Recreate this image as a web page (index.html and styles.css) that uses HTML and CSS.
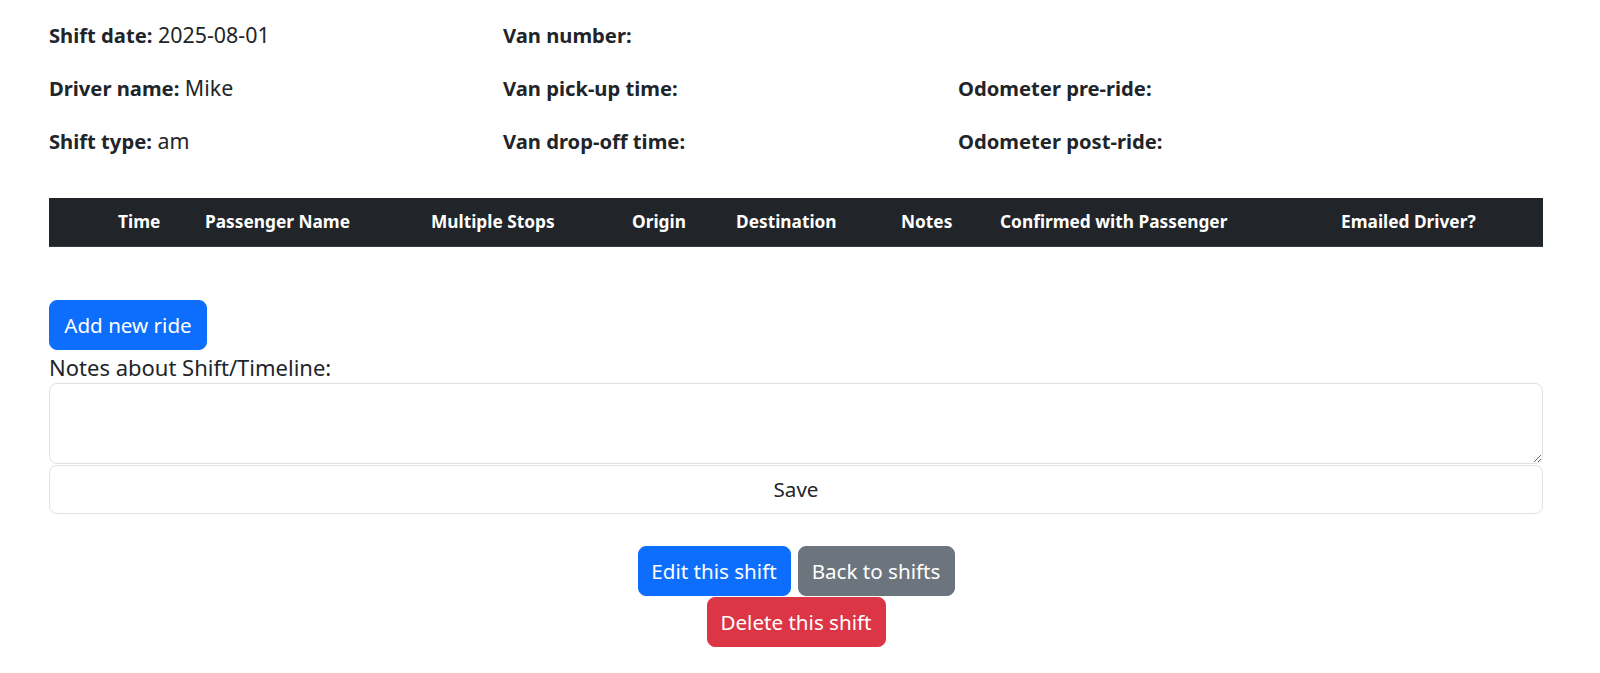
FILE: index.html
```html
<!DOCTYPE html>
<html lang="en">
<head>
<meta charset="utf-8">
<title>Shift</title>
<link rel="stylesheet" href="styles.css">
</head>
<body>
<main class="page">
  <section class="info">
    <p class="field"><strong>Shift date:</strong> 2025-08-01</p>
    <p class="field"><strong>Van number:</strong></p>
    <p class="field"></p>
    <p class="field"><strong>Driver name:</strong> Mike</p>
    <p class="field"><strong>Van pick-up time:</strong></p>
    <p class="field"><strong>Odometer pre-ride:</strong></p>
    <p class="field"><strong>Shift type:</strong> am</p>
    <p class="field"><strong>Van drop-off time:</strong></p>
    <p class="field"><strong>Odometer post-ride:</strong></p>
  </section>

  <table class="rides">
    <colgroup>
      <col class="c0"><col class="c1"><col class="c2"><col class="c3"><col class="c4"><col class="c5"><col class="c6"><col class="c7"><col class="c8">
    </colgroup>
    <thead>
      <tr>
        <th></th>
        <th>Time</th>
        <th>Passenger Name</th>
        <th>Multiple Stops</th>
        <th>Origin</th>
        <th>Destination</th>
        <th>Notes</th>
        <th>Confirmed with Passenger</th>
        <th>Emailed Driver?</th>
      </tr>
    </thead>
    <tbody></tbody>
  </table>

  <div class="add-row">
    <button class="btn btn-primary btn-add">Add new ride</button>
  </div>

  <form class="notes">
    <label class="notes-label" for="notes">Notes about Shift/Timeline:</label>
    <textarea id="notes" class="notes-input"></textarea>
    <button type="button" class="btn-save">Save</button>
  </form>

  <div class="actions">
    <button class="btn btn-primary btn-edit">Edit this shift</button>
    <button class="btn btn-secondary btn-back">Back to shifts</button>
    <button class="btn btn-danger btn-delete">Delete this shift</button>
  </div>
</main>
</body>
</html>
```

FILE: styles.css
```css
* { box-sizing: border-box; }

html, body {
  margin: 0;
  padding: 0;
  background: #ffffff;
}

body {
  font-family: "Segoe UI", "Noto Sans", "Liberation Sans", sans-serif;
  font-size: 21.4px;
  line-height: 30px;
  color: #212529;
}

.page {
  padding: 20px 57px 0 49px;
}

.info {
  display: grid;
  grid-template-columns: 454px 455px 1fr;
  row-gap: 23px;
}

.field {
  margin: 0;
  height: 30px;
  white-space: nowrap;
}

.field strong {
  font-weight: 700;
  font-size: 20.2px;
}

.rides {
  margin-top: 42px;
  width: 100%;
  border-collapse: collapse;
  table-layout: fixed;
}

.c0 { width: 61px; }
.c1 { width: 87px; }
.c2 { width: 226px; }
.c3 { width: 201px; }
.c4 { width: 104px; }
.c5 { width: 165px; }
.c6 { width: 99px; }
.c7 { width: 341px; }
.c8 { width: 210px; }

.rides th {
  background: #212529;
  color: #ffffff;
  font-size: 17.3px;
  font-weight: 700;
  line-height: 24px;
  height: 48px;
  padding: 0 8px;
  text-align: left;
  white-space: nowrap;
  border-bottom: 1px solid #373b3e;
}

.add-row {
  margin-top: 53px;
  display: flex;
}

.btn {
  display: inline-flex;
  align-items: center;
  justify-content: center;
  height: 50px;
  padding: 0;
  font-family: inherit;
  font-size: 20.6px;
  line-height: 30px;
  white-space: nowrap;
  border: 1px solid transparent;
  border-radius: 8px;
  color: #ffffff;
  cursor: pointer;
}

.btn-primary { background: #0d6efd; border-color: #0d6efd; }
.btn-secondary { background: #6c757d; border-color: #6c757d; }
.btn-danger { background: #dc3545; border-color: #dc3545; }

.btn-add { width: 158px; }

.notes {
  margin: 2px 0 0;
  display: flex;
  flex-direction: column;
}

.notes-label {
  display: block;
  height: 30px;
  font-size: 22px;
}

.notes-input {
  display: block;
  width: 100%;
  height: 81px;
  margin: 1px 0 0;
  padding: 8px 14px;
  font-family: inherit;
  font-size: 20px;
  border: 1px solid #dee2e6;
  border-radius: 8px;
  resize: vertical;
  background: #ffffff;
}

.btn-save {
  display: block;
  width: 100%;
  height: 49px;
  margin-top: 1px;
  font-family: inherit;
  font-size: 20.6px;
  color: #212529;
  background: #ffffff;
  border: 1px solid #dee2e6;
  border-radius: 8px;
}

.actions {
  margin: 32px auto 0;
  width: 330px;
  display: flex;
  flex-wrap: wrap;
  justify-content: center;
  column-gap: 7px;
  row-gap: 1px;
}

.btn-edit { width: 153px; }
.btn-back { width: 157px; }
.btn-delete { width: 179px; }
```
